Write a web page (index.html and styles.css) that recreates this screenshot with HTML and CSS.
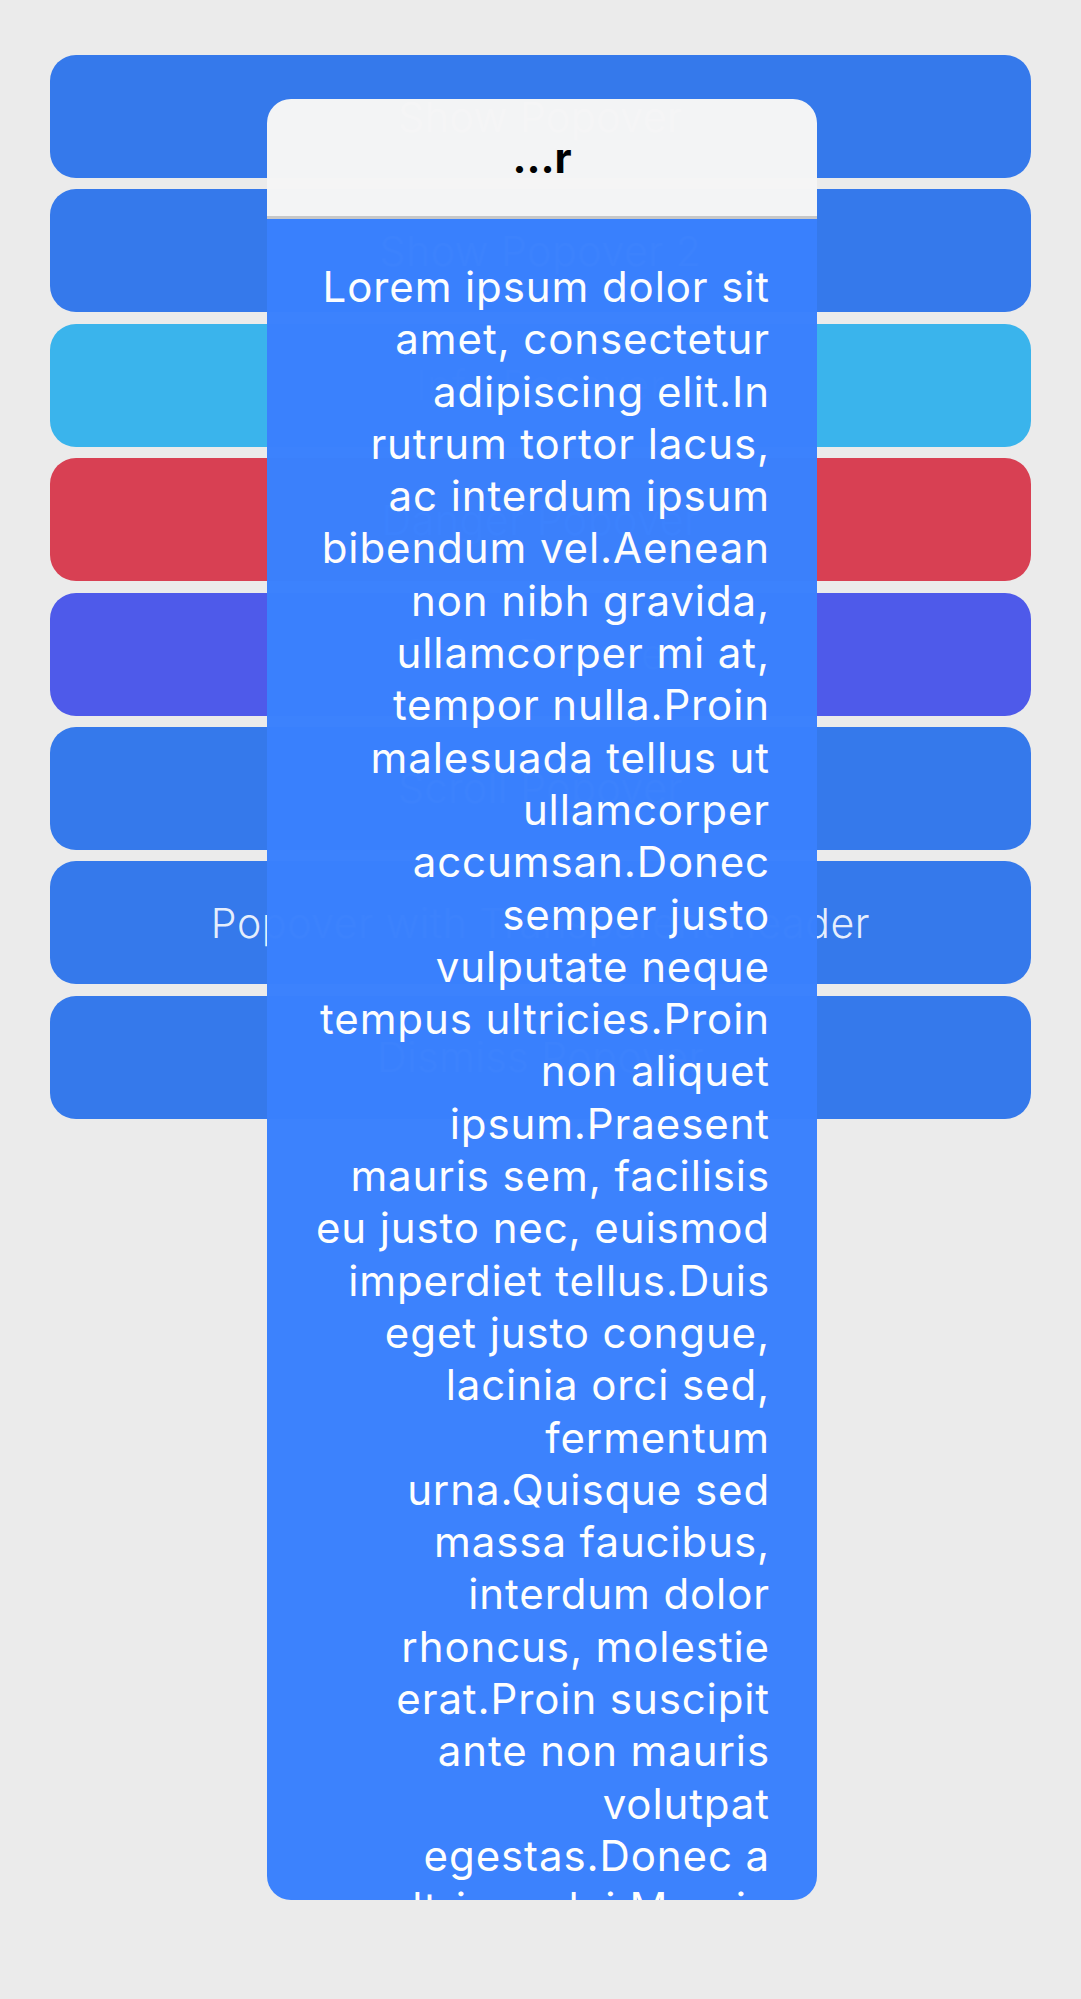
FILE: index.html
```html
<!DOCTYPE html>
<html lang="en">
<head>
<meta charset="utf-8">
<title>Popover</title>
<link rel="stylesheet" href="styles.css">
</head>
<body>
<main class="buttons">
  <div class="btn primary">Show Popover</div>
  <div class="btn primary">Show Popover 2</div>
  <div class="btn info">Info Popover</div>
  <div class="btn danger">Danger Popover</div>
  <div class="btn purple">Color Popover</div>
  <div class="btn primary">Scroll Popover</div>
  <div class="btn primary">Popover with Transparent Header</div>
  <div class="btn primary">Dismiss Popover</div>
</main>

<section class="popover">
  <header class="pop-header">…r</header>
  <div class="pop-body">
    <p class="pop-text">Lorem ipsum dolor sit<br>amet, consectetur<br>adipiscing elit.In<br>rutrum tortor lacus,<br>ac interdum ipsum<br>bibendum vel.Aenean<br>non nibh gravida,<br>ullamcorper mi at,<br>tempor nulla.Proin<br>malesuada tellus ut<br>ullamcorper<br>accumsan.Donec<br>semper justo<br>vulputate neque<br>tempus ultricies.Proin<br>non aliquet<br>ipsum.Praesent<br>mauris sem, facilisis<br>eu justo nec, euismod<br>imperdiet tellus.Duis<br>eget justo congue,<br>lacinia orci sed,<br>fermentum<br>urna.Quisque sed<br>massa faucibus,<br>interdum dolor<br>rhoncus, molestie<br>erat.Proin suscipit<br>ante non mauris<br>volutpat<br>egestas.Donec a<br>ultrices dui.Mauris<br>vel ipsum in</p>
  </div>
</section>
</body>
</html>
```

FILE: styles.css
```css
html, body {
  margin: 0;
  padding: 0;
}

body {
  background: #ebebeb;
  font-family: Inter, "Noto Sans", "Liberation Sans", sans-serif;
  min-height: 1999px;
  position: relative;
}

.buttons {
  display: flex;
  flex-direction: column;
  gap: 11.4px;
  padding: 55px 50px 0 50px;
}

.btn {
  height: 123px;
  border-radius: 26px;
  display: flex;
  align-items: center;
  justify-content: center;
  color: rgba(255, 255, 255, 0.88);
  font-size: 41px;
  letter-spacing: 0.6px;
  font-weight: 300;
  white-space: nowrap;
}

.primary { background: #3579eb; }
.info { background: #3ab4ec; }
.danger { background: #d84053; }
.purple { background: #4e5aea; }

.popover {
  position: absolute;
  left: 267px;
  top: 99px;
  width: 550px;
  height: 1801px;
  border-radius: 24px;
  overflow: hidden;
  opacity: 0.99;
  display: flex;
  flex-direction: column;
}

.pop-header {
  height: 117px;
  flex: none;
  background: #f6f6f6;
  border-bottom: 3px solid #c8c8c8;
  display: flex;
  align-items: center;
  justify-content: center;
  color: #000;
  font-size: 42px;
  font-weight: 700;
}

.pop-body {
  flex: 1;
  background: #3a81fe;
  padding: 42px 47px 0 0;
  color: #fff;
  text-align: right;
}

.pop-text {
  margin: 0;
  font-size: 42px;
  letter-spacing: 0.9px;
  line-height: 52.3px;
  white-space: nowrap;
}
```
